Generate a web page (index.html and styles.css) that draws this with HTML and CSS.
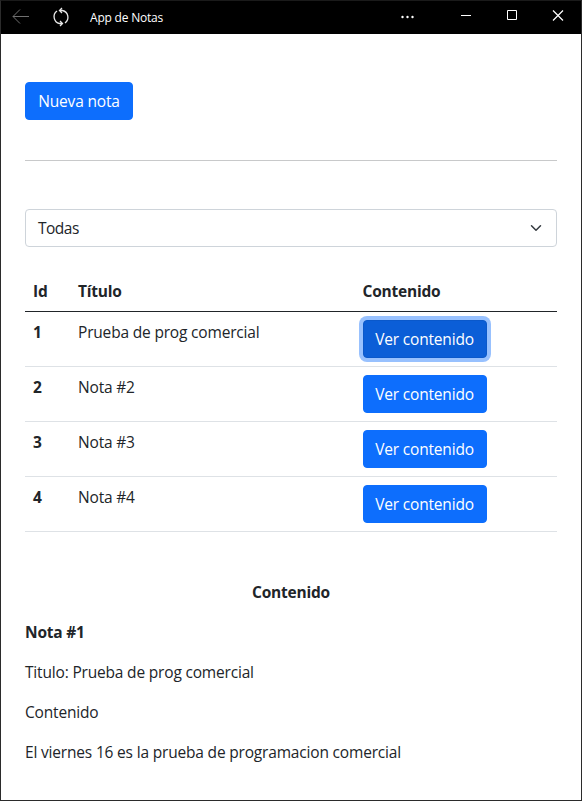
FILE: index.html
```html
<!DOCTYPE html>
<html lang="es">
<head>
<meta charset="utf-8">
<title>App de Notas</title>
<link rel="stylesheet" href="styles.css">
</head>
<body>
<div class="window">
  <header class="titlebar">
    <svg class="icon-back" width="18" height="16" viewBox="0 0 18 16" fill="none" stroke="#707070"><path d="M17 7.500H1M8 .5L1 7.500l7 7"/></svg>
    <svg class="icon-reload" width="18" height="20" viewBox="0 0 18 20" fill="none" stroke="#e8e8e8" stroke-width="1.300"><path d="M7.500 16.500A7 7 0 0 1 5 4M10.500 3.500A7 7 0 0 1 13 16M10 1L7.500 3.500 10 6M7.500 3.500H11M8 14l2.500 2.500L8 19M10.500 16.500H7"/></svg>
    <span class="app-name">App de Notas</span>
    <svg class="icon-more" width="14" height="4" viewBox="0 0 14 4" fill="#fff"><circle cx="1.500" cy="2" r="1.200"/><circle cx="6.500" cy="2" r="1.200"/><circle cx="11.500" cy="2" r="1.200"/></svg>
    <svg class="icon-control" width="12" height="12" viewBox="0 0 12 12" stroke="#fff"><path d="M1 5.500h10"/></svg>
    <svg class="icon-control" width="12" height="12" viewBox="0 0 12 12" fill="none" stroke="#fff"><path d="M1.500.5h9v9h-9z"/></svg>
    <svg class="icon-control" width="12" height="12" viewBox="0 0 12 12" stroke="#fff" stroke-width="1.200"><path d="M1 .5l10 10M11 .5L1 10.500"/></svg>
  </header>
  <main class="content">
    <button class="btn btn-new">Nueva nota</button>
    <hr class="divider">
    <div class="select"><span>Todas</span><svg width="16" height="16" viewBox="0 0 16 16" fill="none" stroke="#343a40" stroke-width="2" stroke-linecap="round" stroke-linejoin="round"><path d="M2 5l6 6 6-6"/></svg></div>
    <table class="notes">
      <thead><tr><th class="col-id">Id</th><th class="col-title">Título</th><th>Contenido</th></tr></thead>
      <tbody>
        <tr><th>1</th><td>Prueba de prog comercial</td><td><button class="btn btn-active">Ver contenido</button></td></tr>
        <tr><th>2</th><td>Nota #2</td><td><button class="btn">Ver contenido</button></td></tr>
        <tr><th>3</th><td>Nota #3</td><td><button class="btn">Ver contenido</button></td></tr>
        <tr><th>4</th><td>Nota #4</td><td><button class="btn">Ver contenido</button></td></tr>
      </tbody>
    </table>
    <section class="detail">
      <p class="heading"><b>Contenido</b></p>
      <p><b>Nota #1</b></p>
      <p>Titulo: Prueba de prog comercial</p>
      <p>Contenido</p>
      <p>El viernes 16 es la prueba de programacion comercial</p>
    </section>
  </main>
</div>
</body>
</html>
```
FILE: styles.css
```css
* { box-sizing: border-box; }
body {
  margin: 0;
  font: 400 15.5px/24px "Open Sans", "Noto Sans", sans-serif;
  letter-spacing: -0.18px;
  color: #212529;
}
.window {
  height: 801px;
  border: 1px solid #2b2b2b;
  border-top-color: #1a1a1a;
  background: #fff;
  overflow: hidden;
}
.titlebar {
  display: flex;
  align-items: center;
  height: 33px;
  padding: 0 17px 0 11px;
  background: #000;
  color: #fff;
}
.icon-back { margin: 0 22px 1px 0; }
.icon-reload { margin: 0 20px 1px 0; }
.app-name { margin-right: auto; font-size: 12px; letter-spacing: -0.2px; }
.icon-more { margin: 0 7px 1px 0; }
.icon-control { margin: 0 0 4px 34px; }
.icon-more + .icon-control { margin-left: 38px; }
.content { padding: 48px 24px 0; }
.btn {
  display: block;
  width: 124px;
  height: 38px;
  padding: 0;
  border: 1px solid #0d6efd;
  border-radius: 4px;
  background: #0d6efd;
  color: #fff;
  font: inherit;
  letter-spacing: inherit;
}
.btn-new { width: 108px; }
.btn-active {
  border-color: #0a58ca;
  background: #0b5ed7;
  box-shadow: 0 0 0 4px #98c1fe;
}
.divider { height: 1px; margin: 40px 0 48px; border: 0; background: #c8c9ca; }
.select {
  display: flex;
  align-items: center;
  justify-content: space-between;
  height: 38px;
  padding: 0 12px;
  border: 1px solid #ced4da;
  border-radius: 4px;
}
.select span { letter-spacing: -0.5px; }
.select svg { width: 12px; height: 12px; margin-right: 2px; }
.notes {
  width: 100%;
  margin-top: 24px;
  border-collapse: separate;
  border-spacing: 0;
  table-layout: fixed;
  text-align: left;
}
.notes th, .notes td { padding: 8px; border-bottom: 1px solid #dee2e6; vertical-align: top; }
.notes thead th { border-bottom-color: #212529; }
.col-id { width: 45px; }
.col-title { width: 284.5px; }
th, b { font-weight: 700; letter-spacing: -0.22px; }
.detail { margin-top: 48px; }
.detail p { margin: 0 0 16px; }
.detail .heading { text-align: center; }
```
